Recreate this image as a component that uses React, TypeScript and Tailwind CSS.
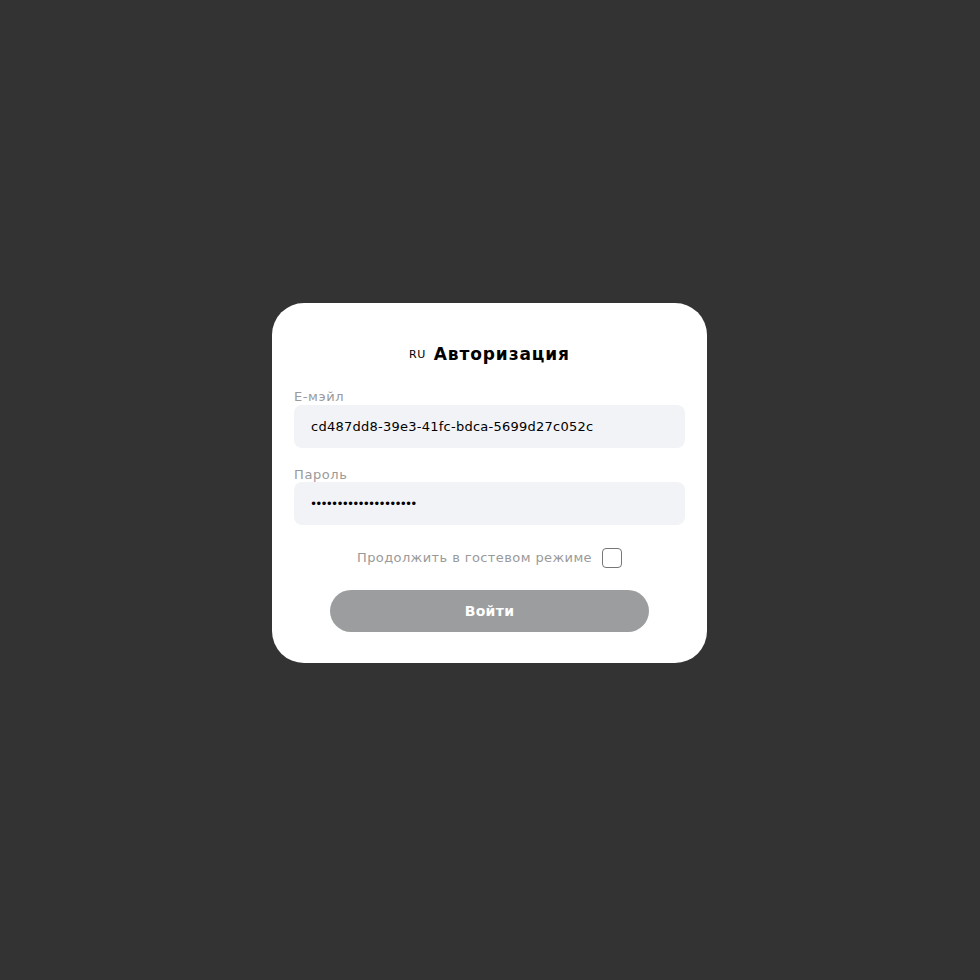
import React from "react";

export default function App() {
  const font = { fontFamily: '"DejaVu Sans", "Noto Sans", sans-serif' };
  return (
    <div className="min-h-[980px] w-full bg-[#333333] flex justify-center pt-[303px] pr-[1px]" style={font}>
      <div className="w-[435px] h-[360px] bg-white rounded-[32px] px-[22px] pt-[42px] flex flex-col">
        <div className="flex items-center justify-center gap-[8px] h-[20px]">
          <span className="text-[11px] text-black tracking-[0.5px]">RU</span>
          <span className="text-[17px] font-bold text-black tracking-[0.9px]">Авторизация</span>
        </div>
        <label className="mt-[25px] text-[13px] leading-[14px] text-[#9a9a9a] tracking-[0.6px]">Е-мэйл</label>
        <div className="mt-[1px] h-[43px] rounded-[8px] bg-[#f2f3f6] flex items-center pl-[17px] text-[13px] text-black tracking-[0.25px]">
          cd487dd8-39e3-41fc-bdca-5699d27c052c
        </div>
        <label className="mt-[20px] text-[13px] leading-[14px] text-[#9a9a9a] tracking-[0.6px]">Пароль</label>
        <div className="h-[43px] rounded-[8px] bg-[#f2f3f6] flex items-center pl-[16px] text-[12px] text-black tracking-[-1.8px]">
          ••••••••••••••••••••
        </div>
        <div className="mt-[23px] h-[20px] flex items-center justify-center gap-[10px]">
          <span className="text-[13px] text-[#9a9a9a] tracking-[0.4px]">Продолжить в гостевом режиме</span>
          <span className="w-[20px] h-[20px] rounded-[4px] border border-[#767676] bg-white" />
        </div>
        <div className="mt-[22px] flex justify-center">
          <button className="w-[319px] h-[42px] rounded-full bg-[#9c9d9e] text-white text-[14px] font-bold tracking-[0.3px]">
            Войти
          </button>
        </div>
      </div>
    </div>
  );
}
